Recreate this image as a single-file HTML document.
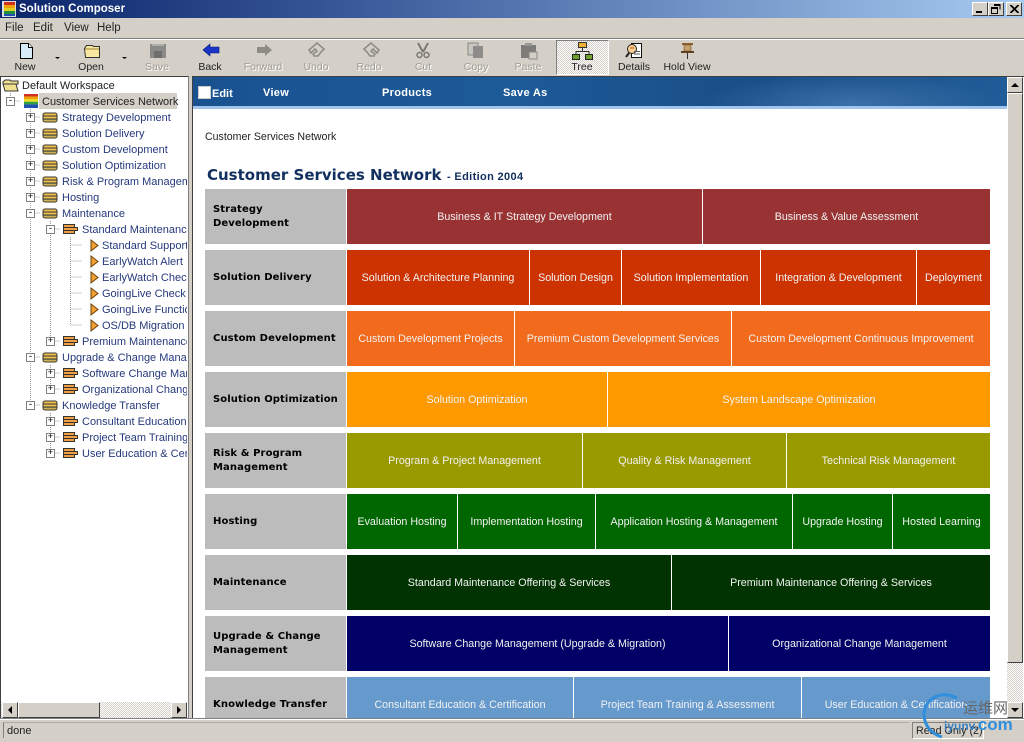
<!DOCTYPE html>
<html><head><meta charset="utf-8"><title>Solution Composer</title>
<style>
html,body{margin:0;padding:0}
body{width:1024px;height:742px;overflow:hidden;position:relative;background:#d4d0c8;font-family:"Liberation Sans",sans-serif;font-size:11px;color:#000}
div,svg,span{position:absolute;box-sizing:border-box}
.t{white-space:nowrap;line-height:14px}
#title{left:0;top:0;width:1024px;height:18px;background:linear-gradient(90deg,#0a246a 0,#3a5a9a 35%,#a6caf0 100%)}
.wb{top:2px;width:16px;height:14px;background:#d4d0c8;border:1px solid;border-color:#fff #404040 #404040 #fff}
.m{top:21px;font-size:11.5px;color:#222}
.tb{text-align:center;font-size:10.5px;top:60px;width:70px;line-height:14px;color:#222}
.dis{color:#a09c94;text-shadow:1px 1px 0 #fff}
.tr{font-size:11px;color:#26397b;white-space:nowrap;line-height:14px}
.lab{left:205px;width:141px;background:#bcbcbc;font:bold 10px/14px "DejaVu Sans",sans-serif;padding-left:8px;display:flex;align-items:center;color:#000;letter-spacing:.1px}
.c{color:#f2f2f2;font-size:10.7px;display:flex;align-items:center;justify-content:center;white-space:nowrap}
.bx{width:9px;height:9px;background:#fff;border:1px solid #808080;font:9px/7px "Liberation Mono",monospace;text-align:center;color:#000}
</style></head><body>

<div id="title"></div>
<svg style="left:2px;top:1px" width="14" height="16" viewBox="0 0 14 16"><rect width="14" height="16" fill="#ddd"/><rect x="2" y="1" width="11" height="3" fill="#d03020"/><rect x="2" y="4" width="11" height="3" fill="#f0a000"/><rect x="2" y="7" width="11" height="3" fill="#e0d020"/><rect x="2" y="10" width="11" height="3" fill="#209040"/><rect x="2" y="13" width="11" height="2" fill="#2050b0"/></svg>
<div class="t" style="left:19px;top:2px;color:#fff;font-weight:bold;font-size:11.5px">Solution Composer</div>
<div class="wb" style="left:972px"><svg style="left:3px;top:8px" width="7" height="2"><rect width="6" height="2" fill="#000"/></svg></div>
<div class="wb" style="left:988px"><svg style="left:2px;top:1px" width="10" height="10"><path d="M3 .5h6v5M3 1.5h6M.5 3.5h6v6h-6zM.5 4.5h6" fill="none" stroke="#000"/></svg></div>
<div class="wb" style="left:1006px"><svg style="left:3px;top:2px" width="9" height="8"><path d="M0 0l8 8M1 0l8 8M8 0l-8 8M9 0l-8 8" stroke="#000" stroke-width="1"/></svg></div>

<div class="m t" style="left:5px">File</div><div class="m t" style="left:33px">Edit</div><div class="m t" style="left:64px">View</div><div class="m t" style="left:97px">Help</div>
<div style="left:0;top:38px;width:1024px;height:1px;background:#808080"></div>
<div style="left:0;top:39px;width:1024px;height:1px;background:#fff"></div>

<!-- toolbar icons -->
<svg style="left:0;top:40px" width="720" height="20" viewBox="0 40 720 20">
<path d="M20.500 43.500h8l4 4v11h-12z" fill="#d8ecf8" stroke="#000"/><path d="M28.500 43.500v4h4" fill="#fff" stroke="#000"/>
<path d="M55 57h5l-2.500 2z" fill="#000"/>
<path d="M84.500 48.500l2-3h6l1 1h6v11h-14z" fill="#f8e8a0" stroke="#333"/><path d="M85 49h14" stroke="#a08030"/>
<path d="M122 57h5l-2.500 2z" fill="#000"/>
<rect x="150" y="44" width="16" height="14" fill="#8a8a88"/><rect x="154" y="51" width="8" height="7" fill="#6e6e6c"/><rect x="152" y="44" width="12" height="2" fill="#b0aea8"/>
<path d="M203 50l7-6v3h9v6h-9v3z" fill="#1a34c8" stroke="#001a70" stroke-width=".6"/>
<path d="M257 47h8v-3l7 6-7 6v-3h-8z" fill="#8e8c86"/>
<path d="M309 50l8-7 7 6-3 3-3 4h-4l-1-2 3-2 1-1-2-2-4 4z" fill="none" stroke="#8e8c86" stroke-width="1.600"/>
<path d="M379 50l-8-7-7 6 3 3 3 4h4l1-2-3-2-1-1 2-2 4 4z" fill="none" stroke="#8e8c86" stroke-width="1.600"/>
<path d="M418 43l5 9M428 43l-5 9" stroke="#7a7874" stroke-width="2"/><circle cx="419.500" cy="55" r="2.500" fill="none" stroke="#7a7874" stroke-width="1.500"/><circle cx="426.500" cy="55" r="2.500" fill="none" stroke="#7a7874" stroke-width="1.500"/>
<rect x="468" y="43" width="10" height="12" fill="#c8c6c0" stroke="#8a8884"/><rect x="473" y="46" width="10" height="12" fill="#8e8c88"/>
<rect x="521" y="45" width="15" height="13" fill="#7e7c78"/><rect x="525" y="43" width="7" height="3" fill="#9a9894"/><rect x="529" y="52" width="8" height="7" fill="#d4d0c8" stroke="#8a8884"/>
</svg>
<div style="left:556px;top:40px;width:53px;height:35px;border:1px solid;border-color:#808080 #fff #fff #808080;background:repeating-conic-gradient(#fff 0 25%,#d4d0c8 0 50%) 0 0/2px 2px"></div>
<svg style="left:570px;top:42px" width="26" height="18"><rect x="8.500" y=".5" width="8" height="5" fill="#f0b030" stroke="#333"/><path d="M12.500 6v3M6 12V9.500h13V12" fill="none" stroke="#333"/><rect x="2.500" y="12.500" width="7" height="5" fill="#70a030" stroke="#222"/><rect x="15.500" y="12.500" width="7" height="5" fill="#70a030" stroke="#222"/></svg>
<svg style="left:625px;top:42px" width="20" height="18"><path d="M6.500 1.500h10v14h-10z" fill="#fff" stroke="#111"/><circle cx="7" cy="7" r="4.500" fill="#f8d090" stroke="#222"/><path d="M4 11l-3 4" stroke="#222" stroke-width="2"/><path d="M9 12h6M9 9.500h6" stroke="#555"/><path d="M5 6h4" stroke="#d05020"/></svg>
<svg style="left:678px;top:42px" width="20" height="18"><rect x="4" y="1" width="11" height="2" fill="#8a6030"/><rect x="6" y="3" width="7" height="6" fill="#c8a070" stroke="#7a5020" stroke-width=".6"/><rect x="3" y="9" width="13" height="2" fill="#604020"/><path d="M9.500 11v6" stroke="#333"/></svg>

<div class="tb" style="left:-10px">New</div>
<div class="tb" style="left:56px">Open</div>
<div class="tb dis" style="left:122px">Save</div>
<div class="tb" style="left:175px">Back</div>
<div class="tb dis" style="left:228px">Forward</div>
<div class="tb dis" style="left:281px">Undo</div>
<div class="tb dis" style="left:334px">Redo</div>
<div class="tb dis" style="left:388px">Cut</div>
<div class="tb dis" style="left:441px">Copy</div>
<div class="tb dis" style="left:493px">Paste</div>
<div class="tb" style="left:547px;top:60px">Tree</div>
<div class="tb" style="left:599px">Details</div>
<div class="tb" style="left:652px">Hold View</div>

<!-- tree pane -->
<div style="left:0;top:76px;width:189px;height:643px;background:#fff;border:1px solid;border-color:#404040 #808080 #808080 #404040;overflow:hidden">
<svg style="left:0;top:0" width="188" height="640" viewBox="1 77 188 640">
<g stroke="#9a9a9a" stroke-dasharray="1 1" fill="none">
<path d="M10.500 93v14M30.500 109v296M30.500 117h10M30.500 133h10M30.500 149h10M30.500 165h10M30.500 181h10M30.500 197h10M30.500 213h10M30.500 357h10M30.500 405h10M50.500 221v120M50.500 229h10M50.500 341h10M70.500 237v88M70.500 245h12M70.500 261h12M70.500 277h12M70.500 293h12M70.500 309h12M70.500 325h12M50.500 365v24M50.500 373h10M50.500 389h10M50.500 413v40M50.500 421h10M50.500 437h10M50.500 453h10M10.500 101h10"/>
</g>
<path d="M3 82l2-2h5l1 1h7v3h-15zM3 84h13l2 7H5z" fill="#f0e090" stroke="#333"/>
</svg>
</div>
<div style="left:39px;top:93px;width:138px;height:16px;background:#d4d0c8"></div>
<svg style="left:0;top:77px" width="188" height="390" viewBox="0 77 188 390">
<defs>
<g id="db"><rect x="0" y="1" width="14" height="9" rx="2" fill="#f0c050" stroke="#333"/><path d="M0 4h14M0 7h14" stroke="#333"/><path d="M1 8h12" stroke="#a0a060"/></g>
<g id="st"><path d="M.5 .5h11v3h3v3h-3v3h-11z" fill="#f0a040" stroke="#333"/><path d="M1 3.500h10M1 6.500h10" stroke="#333"/></g>
<g id="ar"><path d="M1 0l7 5.500-7 5.500z" fill="#f0a030" stroke="#6a4010"/></g>
</defs>
<rect x="24" y="94" width="14" height="2.600" fill="#d03020"/><rect x="24" y="96.600" width="14" height="2.600" fill="#f0a000"/><rect x="24" y="99.200" width="14" height="2.600" fill="#e8d820"/><rect x="24" y="101.800" width="14" height="2.600" fill="#30a040"/><rect x="24" y="104.400" width="14" height="3.600" fill="#2050b0"/>
<use href="#db" x="43" y="112"/><use href="#db" x="43" y="128"/><use href="#db" x="43" y="144"/><use href="#db" x="43" y="160"/><use href="#db" x="43" y="176"/><use href="#db" x="43" y="192"/><use href="#db" x="43" y="208"/><use href="#db" x="43" y="352"/><use href="#db" x="43" y="400"/>
<use href="#st" x="63" y="224"/><use href="#st" x="63" y="336"/><use href="#st" x="63" y="368"/><use href="#st" x="63" y="384"/><use href="#st" x="63" y="416"/><use href="#st" x="63" y="432"/><use href="#st" x="63" y="448"/>
<use href="#ar" x="90" y="240"/><use href="#ar" x="90" y="256"/><use href="#ar" x="90" y="272"/><use href="#ar" x="90" y="288"/><use href="#ar" x="90" y="304"/><use href="#ar" x="90" y="320"/>
</svg>
<div class="bx" style="left:6px;top:97px">-</div>
<div class="bx" style="left:26px;top:113px">+</div><div class="bx" style="left:26px;top:129px">+</div><div class="bx" style="left:26px;top:145px">+</div><div class="bx" style="left:26px;top:161px">+</div><div class="bx" style="left:26px;top:177px">+</div><div class="bx" style="left:26px;top:193px">+</div><div class="bx" style="left:26px;top:209px">-</div><div class="bx" style="left:46px;top:225px">-</div><div class="bx" style="left:46px;top:337px">+</div><div class="bx" style="left:26px;top:353px">-</div><div class="bx" style="left:46px;top:369px">+</div><div class="bx" style="left:46px;top:385px">+</div><div class="bx" style="left:26px;top:401px">-</div><div class="bx" style="left:46px;top:417px">+</div><div class="bx" style="left:46px;top:433px">+</div><div class="bx" style="left:46px;top:449px">+</div>

<div style="left:0;top:78px;width:187px;height:400px;overflow:hidden">
<div class="tr" style="left:22px;top:1px;color:#222">Default Workspace</div>
<div class="tr" style="left:42px;top:17px;color:#222">Customer Services Network</div>
<div class="tr" style="left:62px;top:33px">Strategy Development</div>
<div class="tr" style="left:62px;top:49px">Solution Delivery</div>
<div class="tr" style="left:62px;top:65px">Custom Development</div>
<div class="tr" style="left:62px;top:81px">Solution Optimization</div>
<div class="tr" style="left:62px;top:97px">Risk &amp; Program Management</div>
<div class="tr" style="left:62px;top:113px">Hosting</div>
<div class="tr" style="left:62px;top:129px">Maintenance</div>
<div class="tr" style="left:82px;top:145px">Standard Maintenance Offering</div>
<div class="tr" style="left:102px;top:161px">Standard Support</div>
<div class="tr" style="left:102px;top:177px">EarlyWatch Alert</div>
<div class="tr" style="left:102px;top:193px">EarlyWatch Check</div>
<div class="tr" style="left:102px;top:209px">GoingLive Check</div>
<div class="tr" style="left:102px;top:225px">GoingLive Functional</div>
<div class="tr" style="left:102px;top:241px">OS/DB Migration Check</div>
<div class="tr" style="left:82px;top:257px">Premium Maintenance Offering</div>
<div class="tr" style="left:62px;top:273px">Upgrade &amp; Change Management</div>
<div class="tr" style="left:82px;top:289px">Software Change Management</div>
<div class="tr" style="left:82px;top:305px">Organizational Change</div>
<div class="tr" style="left:62px;top:321px">Knowledge Transfer</div>
<div class="tr" style="left:82px;top:337px">Consultant Education</div>
<div class="tr" style="left:82px;top:353px">Project Team Training</div>
<div class="tr" style="left:82px;top:369px">User Education &amp; Certification</div>
</div>

<!-- tree h-scroll -->
<div style="left:1px;top:702px;width:186px;height:16px;background:repeating-conic-gradient(#fff 0 25%,#d4d0c8 0 50%) 0 0/2px 2px"></div>
<div style="left:2px;top:702px;width:16px;height:16px;background:#d4d0c8;border:1px solid;border-color:#fff #404040 #404040 #fff"><svg style="left:5px;top:3px" width="5" height="8"><path d="M4 0v8L0 4z"/></svg></div>
<div style="left:18px;top:702px;width:82px;height:16px;background:#d4d0c8;border:1px solid;border-color:#fff #404040 #404040 #fff"></div>
<div style="left:171px;top:702px;width:16px;height:16px;background:#d4d0c8;border:1px solid;border-color:#fff #404040 #404040 #fff"><svg style="left:5px;top:3px" width="5" height="8"><path d="M0 0v8l4-4z"/></svg></div>

<!-- content -->
<div style="left:192px;top:76px;width:832px;height:643px;background:#fff;border-left:1px solid #404040;border-top:1px solid #404040"></div>
<div style="left:193px;top:77px;width:814px;height:29px;background:radial-gradient(ellipse 150px 30px at 660px 27px,#3a70a8,transparent),linear-gradient(90deg,#1a5290 0,#1d5a98 40%,#1a4e86 70%,#205c98 100%)"></div>
<div style="left:193px;top:106px;width:814px;height:3px;background:#a0c4ec"></div>
<div style="left:198px;top:86px;width:13px;height:13px;background:#fff;border:1px solid #ccc"></div>
<div class="t" style="left:212px;top:87px;color:#fff;font-weight:bold;font-size:11px">Edit</div>
<div class="t" style="left:263px;top:86px;color:#fff;font-weight:bold;font-size:11px;letter-spacing:.3px">View</div>
<div class="t" style="left:382px;top:86px;color:#fff;font-weight:bold;font-size:11px;letter-spacing:.3px">Products</div>
<div class="t" style="left:503px;top:86px;color:#fff;font-weight:bold;font-size:11px;letter-spacing:.3px">Save As</div>

<div class="t" style="left:205px;top:130px;font-size:10.6px;color:#222">Customer Services Network</div>
<div class="t" style="left:207px;top:166px;font:bold 15px/18px 'DejaVu Sans',sans-serif;color:#12305f">Customer Services Network</div>
<div class="t" style="left:447px;top:170px;font:bold 11px/14px 'Liberation Sans',sans-serif;color:#12305f;letter-spacing:.35px">- Edition 2004</div>

<div style="left:0;top:0;width:1024px;height:718px;overflow:hidden">
<div class="lab" style="top:189px;height:55px">Strategy<br>Development</div>
<div class="c" style="left:347px;width:355px;top:189px;height:55px;background:#993333">Business &amp; IT Strategy Development</div>
<div class="c" style="left:703px;width:287px;top:189px;height:55px;background:#993333">Business &amp; Value Assessment</div>

<div class="lab" style="top:250px;height:55px">Solution Delivery</div>
<div class="c" style="left:347px;width:182px;top:250px;height:55px;background:#cc3300">Solution &amp; Architecture Planning</div>
<div class="c" style="left:530px;width:91px;top:250px;height:55px;background:#cc3300">Solution Design</div>
<div class="c" style="left:622px;width:138px;top:250px;height:55px;background:#cc3300">Solution Implementation</div>
<div class="c" style="left:761px;width:155px;top:250px;height:55px;background:#cc3300">Integration &amp; Development</div>
<div class="c" style="left:917px;width:73px;top:250px;height:55px;background:#cc3300">Deployment</div>

<div class="lab" style="top:311px;height:55px">Custom Development</div>
<div class="c" style="left:347px;width:167px;top:311px;height:55px;background:#f26a1b">Custom Development Projects</div>
<div class="c" style="left:515px;width:216px;top:311px;height:55px;background:#f26a1b">Premium Custom Development Services</div>
<div class="c" style="left:732px;width:258px;top:311px;height:55px;background:#f26a1b">Custom Development Continuous Improvement</div>

<div class="lab" style="top:372px;height:55px">Solution Optimization</div>
<div class="c" style="left:347px;width:260px;top:372px;height:55px;background:#ff9900">Solution Optimization</div>
<div class="c" style="left:608px;width:382px;top:372px;height:55px;background:#ff9900">System Landscape Optimization</div>

<div class="lab" style="top:433px;height:55px">Risk &amp; Program<br>Management</div>
<div class="c" style="left:347px;width:235px;top:433px;height:55px;background:#999900">Program &amp; Project Management</div>
<div class="c" style="left:583px;width:203px;top:433px;height:55px;background:#999900">Quality &amp; Risk Management</div>
<div class="c" style="left:787px;width:203px;top:433px;height:55px;background:#999900">Technical Risk Management</div>

<div class="lab" style="top:494px;height:55px">Hosting</div>
<div class="c" style="left:347px;width:110px;top:494px;height:55px;background:#006600">Evaluation Hosting</div>
<div class="c" style="left:458px;width:137px;top:494px;height:55px;background:#006600">Implementation Hosting</div>
<div class="c" style="left:596px;width:196px;top:494px;height:55px;background:#006600">Application Hosting &amp; Management</div>
<div class="c" style="left:793px;width:99px;top:494px;height:55px;background:#006600">Upgrade Hosting</div>
<div class="c" style="left:893px;width:97px;top:494px;height:55px;background:#006600">Hosted Learning</div>

<div class="lab" style="top:555px;height:55px">Maintenance</div>
<div class="c" style="left:347px;width:324px;top:555px;height:55px;background:#003300">Standard Maintenance Offering &amp; Services</div>
<div class="c" style="left:672px;width:318px;top:555px;height:55px;background:#003300">Premium Maintenance Offering &amp; Services</div>

<div class="lab" style="top:616px;height:55px">Upgrade &amp; Change<br>Management</div>
<div class="c" style="left:347px;width:381px;top:616px;height:55px;background:#000066">Software Change Management (Upgrade &amp; Migration)</div>
<div class="c" style="left:729px;width:261px;top:616px;height:55px;background:#000066">Organizational Change Management</div>

<div class="lab" style="top:677px;height:55px">Knowledge Transfer</div>
<div class="c" style="left:347px;width:226px;top:677px;height:55px;background:#6699cc">Consultant Education &amp; Certification</div>
<div class="c" style="left:574px;width:227px;top:677px;height:55px;background:#6699cc">Project Team Training &amp; Assessment</div>
<div class="c" style="left:802px;width:188px;top:677px;height:55px;background:#6699cc">User Education &amp; Certification</div>
</div>

<!-- main v-scroll -->
<div style="left:1007px;top:77px;width:16px;height:641px;background:repeating-conic-gradient(#fff 0 25%,#d4d0c8 0 50%) 0 0/2px 2px"></div>
<div style="left:1007px;top:77px;width:16px;height:16px;background:#d4d0c8;border:1px solid;border-color:#fff #404040 #404040 #fff"><svg style="left:3px;top:5px" width="8" height="5"><path d="M0 4h8L4 0z"/></svg></div>
<div style="left:1007px;top:93px;width:16px;height:570px;background:#d4d0c8;border:1px solid;border-color:#fff #404040 #404040 #fff"></div>
<div style="left:1007px;top:702px;width:16px;height:16px;background:#d4d0c8;border:1px solid;border-color:#fff #404040 #404040 #fff"><svg style="left:3px;top:5px" width="8" height="5"><path d="M0 0h8L4 4z"/></svg></div>

<!-- status bar -->
<div style="left:0;top:718px;width:1024px;height:24px;background:#d4d0c8;border-top:1px solid #808080"></div>
<div style="left:0;top:719px;width:1024px;height:1px;background:#fff"></div>
<div style="left:3px;top:722px;width:906px;height:16px;border-left:1px solid #808080;border-top:1px solid #b0aca4"></div>
<div class="t" style="left:7px;top:724px;font-size:11px;color:#222">done</div>
<div style="left:912px;top:722px;width:72px;height:17px;border:1px solid;border-color:#808080 #fff #fff #808080"></div>
<div class="t" style="left:916px;top:724px;font-size:10.7px;color:#222">Read Only (2)</div>

<!-- watermark -->
<svg style="left:915px;top:690px" width="60" height="52"><path d="M42 8C26 0 10 8 9 24c0 12 8 20 18 23" fill="none" stroke="#2f8fdc" stroke-width="3"/></svg>
<div class="t" style="left:963px;top:700px;font:15px/16px 'Noto Sans CJK SC',sans-serif;color:#666">运维网</div>
<div class="t" style="left:944px;top:716px;font:bold 12px/18px 'Liberation Sans',sans-serif;color:#3a80c0">iyunv.<span style="position:static;font-size:17px;color:#2f8fdc">com</span></div>
</body></html>
